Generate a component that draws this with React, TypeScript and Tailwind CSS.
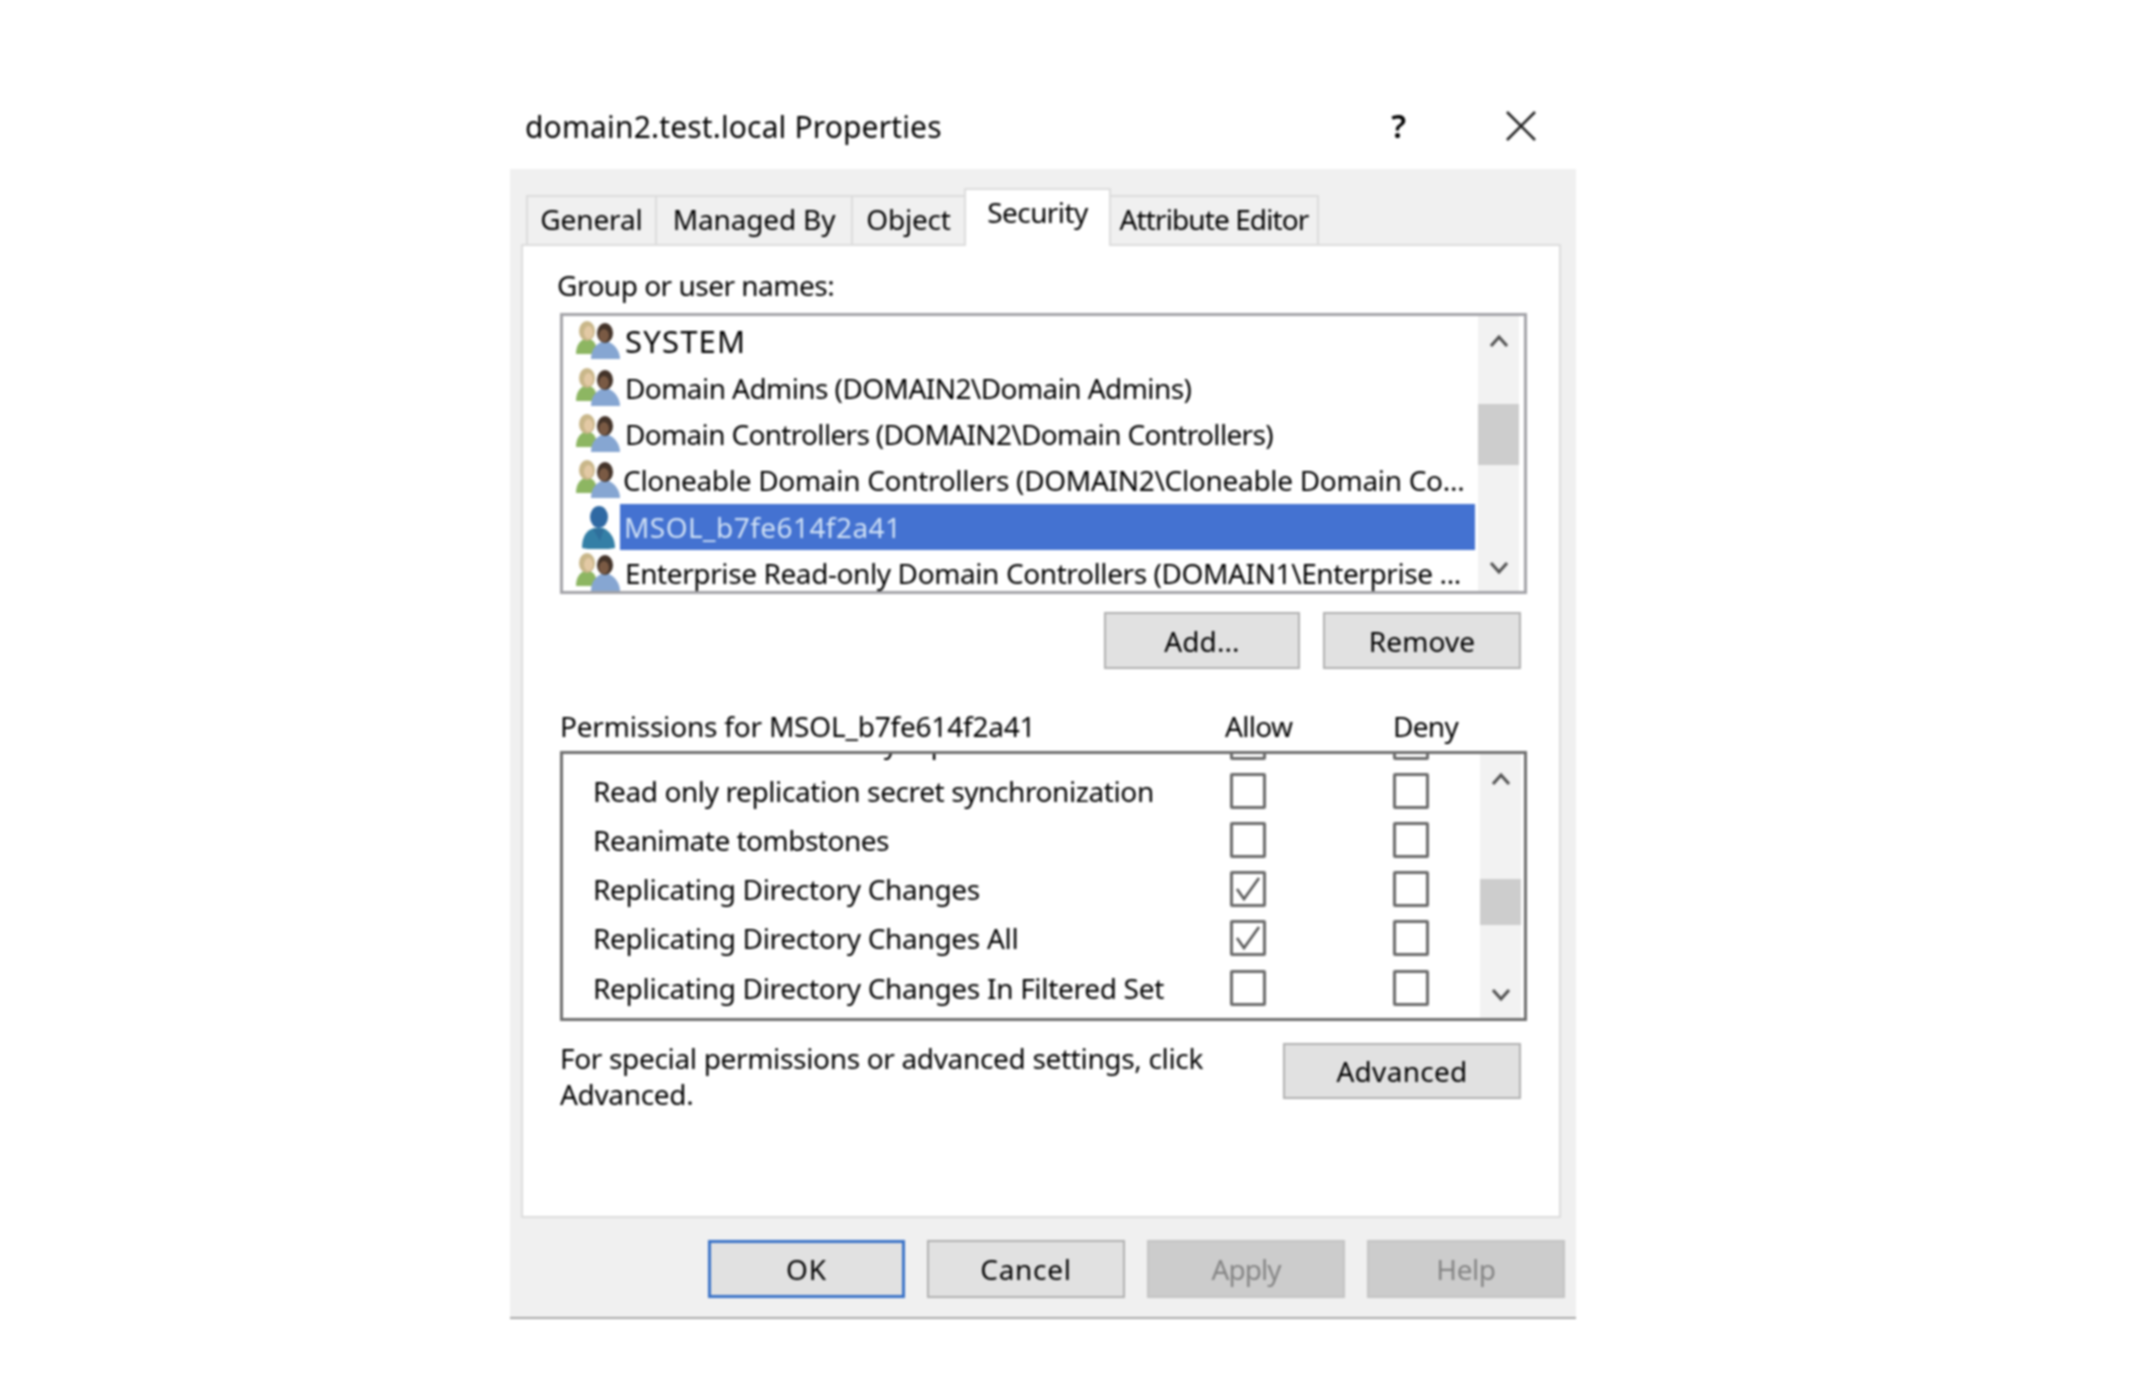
const font = { fontFamily: '"Noto Sans", sans-serif' }

function GroupIcon() {
  return (
    <svg width="44" height="40" viewBox="0 0 44 40" className="shrink-0">
      <path d="M0 33 C0 24 4 20 8 18 L14 18 C19 20 21 25 21 33 Z" fill="#8db662" />
      <ellipse cx="11" cy="10" rx="8" ry="10" fill="#c9b78a" />
      <ellipse cx="12.5" cy="11.5" rx="4.5" ry="6.5" fill="#e3c9a4" />
      <path d="M15 38 C15 28 20 24 25 21 L33 21 C39 24 44 30 44 38 Z" fill="#86a6d2" />
      <ellipse cx="29" cy="12" rx="8" ry="10" fill="#433329" />
      <ellipse cx="28" cy="14.5" rx="5" ry="6.5" fill="#7a5a44" />
    </svg>
  )
}

function UserIcon() {
  return (
    <svg width="44" height="44" viewBox="0 0 44 44" className="shrink-0">
      <path d="M6 43 C6 31 11 25 18 23 L27 23 C34 26 39 33 39 43 C30 45 14 45 6 43 Z" fill="#347fa6" />
      <ellipse cx="23" cy="12" rx="9" ry="11" fill="#2f69a3" />
      <path d="M17 24 L28 24 L24 36 Z" fill="#2f6f9c" />
    </svg>
  )
}

function Chevron({ up }: { up?: boolean }) {
  return (
    <svg width="22" height="14" viewBox="0 0 22 14">
      <polyline
        points={up ? "3,12 11,3 19,12" : "3,2 11,11 19,2"}
        fill="none"
        stroke="#505050"
        strokeWidth="3"
      />
    </svg>
  )
}

function Scrollbar({ thumb, extra }: { thumb: string; extra?: string }) {
  return (
    <div className={`w-[41px] shrink-0 bg-[#f2f2f2] flex flex-col items-center pt-[10px] pb-[8px] ${extra ?? ""}`}>
      <div className="h-[30px] flex items-center">
        <Chevron up />
      </div>
      <div className={`w-full bg-[#cdcdcd] ${thumb}`} />
      <div className="mt-auto h-[30px] flex items-center">
        <Chevron />
      </div>
    </div>
  )
}

function Btn({ label, w, h = "h-[57px]", kind, track = "tracking-[0.1px]" }: { label: string; w: string; h?: string; kind?: "primary" | "off"; track?: string }) {
  const look =
    kind === "primary"
      ? "bg-[#e1e1e1] border-[3px] border-[#3b73c8] text-black"
      : kind === "off"
        ? "bg-[#cccccc] border-2 border-[#c4c4c4] text-[#858585]"
        : "bg-[#e1e1e1] border-2 border-[#b0b0b0] text-black"
  return (
    <div className={`${w} ${h} ${look} ${track} flex items-center justify-center text-[28px]`}>{label}</div>
  )
}

function Tab({ label, w, active, track }: { label: string; w: string; active?: boolean; track: string }) {
  return active ? (
    <div className={`${w} h-[58px] bg-white border-2 border-b-0 border-[#dcdcdc] -mb-[2px] relative z-10 pt-[3px] text-center text-[28px] leading-[38px] ${track} text-black`}>
      {label}
    </div>
  ) : (
    <div className={`${w} h-[49px] bg-[#f0f0f0] border-2 border-b-0 border-[#dcdcdc] -mr-[2px] text-center text-[28px] leading-[44px] ${track} text-black`}>
      {label}
    </div>
  )
}

function Check({ on }: { on?: boolean }) {
  return (
    <div className="w-[36px] h-[36px] rounded-[2px] border-[3px] border-[#6a6a6a] bg-white flex items-center justify-center">
      {on && (
        <svg width="28" height="28" viewBox="0 0 28 28">
          <polyline points="3,14 10,24 25,3" fill="none" stroke="#555" strokeWidth="2.5" />
        </svg>
      )}
    </div>
  )
}

const users = [
  { name: "SYSTEM", track: "text-[31px] tracking-[1.2px]" },
  { name: "Domain Admins (DOMAIN2\\Domain Admins)", track: "tracking-[-0.57px]" },
  { name: "Domain Controllers (DOMAIN2\\Domain Controllers)", track: "tracking-[-0.67px]" },
  { name: "Cloneable Domain Controllers (DOMAIN2\\Cloneable Domain Co...", track: "tracking-[-0.3px] -ml-[2px]" },
  { name: "MSOL_b7fe614f2a41", track: "tracking-[0.45px]", selected: true },
  { name: "Enterprise Read-only Domain Controllers (DOMAIN1\\Enterprise ...", track: "tracking-[-0.4px]" },
]

const perms = [
  { name: "Monitor active directory replication", track: "tracking-[-0.4px]" },
  { name: "Read only replication secret synchronization", track: "tracking-[-0.4px]" },
  { name: "Reanimate tombstones", track: "tracking-[-0.5px]" },
  { name: "Replicating Directory Changes", track: "tracking-[-0.3px]", allow: true },
  { name: "Replicating Directory Changes All", track: "tracking-[-0.3px]", allow: true },
  { name: "Replicating Directory Changes In Filtered Set", track: "tracking-[-0.3px]" },
]

export default function App() {
  return (
    <div style={font} className="min-h-[1400px] bg-white pl-[510px] pt-[89px] text-[28px] text-black blur-[1px]">
      <div className="w-[1066px]">
        {/* title bar */}
        <div className="h-[80px] flex items-start pl-[15px] pt-[18px]">
          <span className="text-[30px] leading-[40px] tracking-[0.15px]">domain2.test.local Properties</span>
          <span className="ml-auto mr-[100px] text-[32px] leading-[38px] font-semibold">?</span>
          <svg width="30" height="30" viewBox="0 0 30 30" className="mr-[40px] mt-[4px]">
            <path d="M1 1 L29 29 M29 1 L1 29" stroke="#222" strokeWidth="2.6" />
          </svg>
        </div>

        <div className="bg-[#f0f0f0] border-b-2 border-[#a8a8a8] pt-[19px] pb-[19px]">
          {/* tabs */}
          <div className="flex items-end h-[56px] pl-[16px]">
            <Tab label="General" w="w-[131px]" track="tracking-[-0.1px]" />
            <Tab label="Managed By" w="w-[198px]" track="tracking-[-0.15px]" />
            <Tab label="Object" w="w-[115px]" track="tracking-[-0.2px]" />
            <Tab label="Security" w="w-[147px]" track="tracking-[-0.6px]" active />
            <Tab label="Attribute Editor" w="w-[210px]" track="tracking-[-0.9px] -ml-[2px]" />
          </div>

          {/* page */}
          <div className="ml-[11px] w-[1040px] h-[974px] bg-white border-2 border-[#dcdcdc] pl-[37px]">
            <div className="pt-[22px] pb-[11px] leading-[34px] tracking-[-0.5px] -ml-[3px]">Group or user names:</div>

            <div className="w-[967px] h-[281px] border-[3px] border-[#a3a3a8] flex overflow-hidden pr-[5px]">
              <div className="flex-1 min-w-0 pt-[2px]">
                {users.map((u) => (
                  <div key={u.name} className="h-[46.4px] flex items-center pl-[13px] whitespace-nowrap">
                    {u.selected ? <UserIcon /> : <GroupIcon />}
                    <div
                      className={
                        u.selected
                          ? `flex-1 h-full pl-[4px] bg-[#4472d1] text-[#cfe0f5] leading-[46px] ${u.track}`
                          : `pl-[5px] ${u.track}`
                      }
                    >
                      {u.name}
                    </div>
                  </div>
                ))}
              </div>
              <Scrollbar thumb="mt-[48px] h-[61px]" extra="ml-[3px]" />
            </div>

            <div className="w-[961px] mt-[18px] flex justify-end gap-[23px]">
              <Btn label="Add..." w="w-[196px]" />
              <Btn label="Remove" w="w-[198px]" />
            </div>

            <div className="mt-[40px] h-[34px] flex leading-[34px] whitespace-nowrap">
              <span className="w-[665px] tracking-[-0.2px]">Permissions for MSOL_b7fe614f2a41</span>
              <span className="w-[168px] tracking-[-0.7px]">Allow</span>
              <span className="tracking-[-0.7px]">Deny</span>
            </div>

            <div className="mt-[8px] w-[967px] h-[270px] border-[3px] border-[#6e6e6e] flex overflow-hidden pr-[3px]">
              <div className="flex-1 min-w-0 -mt-[37px] pl-[30px]">
                {perms.map((p) => (
                  <div key={p.name} className={`h-[49.2px] flex items-center whitespace-nowrap ${p.track}`}>
                    <span className="w-[637px]">{p.name}</span>
                    <Check on={p.allow} />
                    <span className="w-[127px]" />
                    <Check />
                  </div>
                ))}
              </div>
              <Scrollbar thumb="mt-[85px] h-[46px]" />
            </div>

            <div className="w-[961px] mt-[19px] flex items-start justify-between">
              <div className="leading-[36px] tracking-[-0.33px] w-[700px]">
                For special permissions or advanced settings, click Advanced.
              </div>
              <div className="mt-[3px]">
                <Btn label="Advanced" w="w-[238px]" h="h-[56px]" track="tracking-[0.3px]" />
              </div>
            </div>
          </div>

          {/* bottom buttons */}
          <div className="mt-[22px] pr-[11px] flex justify-end gap-[22px]">
            <Btn label="OK" w="w-[197px]" h="h-[58px]" kind="primary" track="tracking-[1px]" />
            <Btn label="Cancel" w="w-[198px]" h="h-[58px]" track="tracking-[0.7px]" />
            <Btn label="Apply" w="w-[198px]" h="h-[58px]" kind="off" track="tracking-[-1px]" />
            <Btn label="Help" w="w-[198px]" h="h-[58px]" kind="off" track="tracking-[-0.4px]" />
          </div>
        </div>
      </div>
    </div>
  )
}
